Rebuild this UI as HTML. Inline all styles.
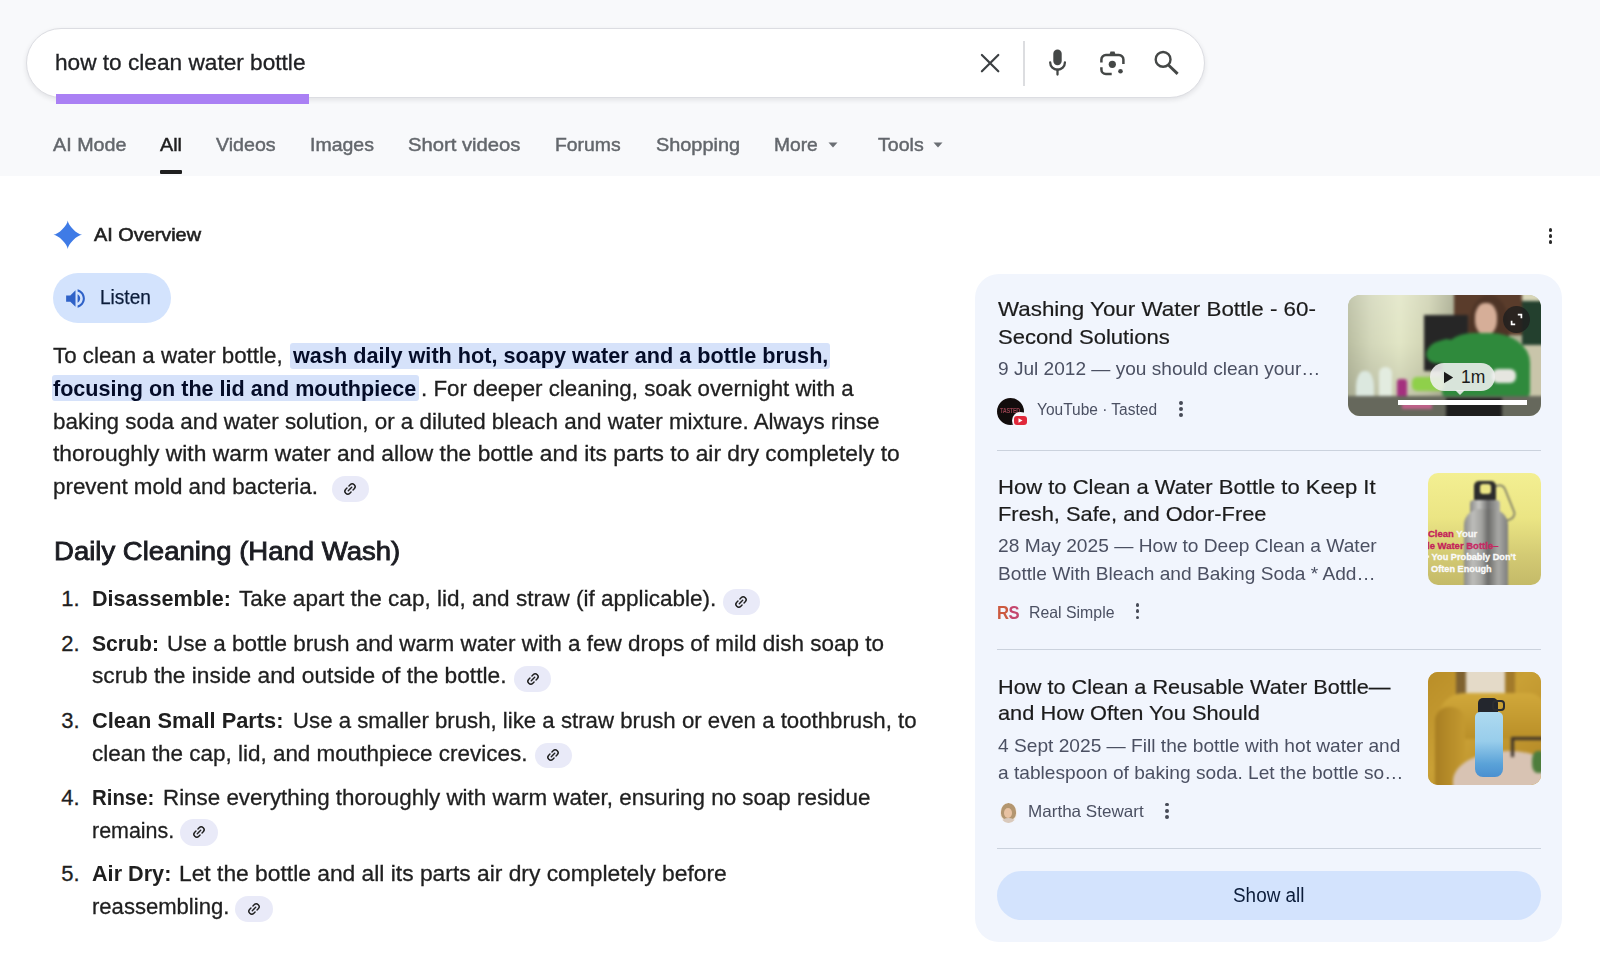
<!DOCTYPE html>
<html><head><meta charset="utf-8"><style>
html,body{margin:0;padding:0;}
body{width:1600px;height:973px;position:relative;overflow:hidden;background:#fff;font-family:"Liberation Sans",sans-serif;}
.ln{position:absolute;white-space:pre;}
.abs{position:absolute;}
.chip{position:absolute;background:#e9eaf8;border-radius:14px;display:flex;align-items:center;justify-content:center;}
.dot{position:absolute;border-radius:50%;}
</style></head><body>
<div class="abs" style="left:0;top:0;width:1600px;height:176px;background:#f8f9fb"></div>
<!-- search box -->
<div class="abs" style="left:26px;top:28px;width:1177px;height:68px;border:1px solid #dcdde2;border-radius:36px;background:#fff;box-shadow:0 2px 5px rgba(32,33,36,0.10)"></div>
<div class="abs" style="left:56px;top:94px;width:253px;height:10px;background:#aa80f4"></div>
<!-- X icon -->
<svg class="abs" style="left:970px;top:44px" width="40" height="40" viewBox="0 0 40 40"><path d="M11.9 11L28.3 27.3M28.3 11L11.9 27.3" stroke="#3c4043" stroke-width="2.2" stroke-linecap="round" fill="none"/></svg>
<div class="abs" style="left:1023.2px;top:41px;width:1.4px;height:44.5px;background:#dcdde0"></div>
<!-- mic -->
<svg class="abs" style="left:1040px;top:44px" width="40" height="38" viewBox="0 0 40 38"><rect x="13.3" y="5.5" width="8.4" height="15.8" rx="4.2" fill="#444746"/><path d="M10.2 18.4a7.3 7.3 0 0 0 14.7 0" stroke="#444746" stroke-width="2.3" stroke-linecap="round" fill="none"/><path d="M17.5 25.6V30.6" stroke="#444746" stroke-width="2.3" stroke-linecap="round"/></svg>
<!-- lens -->
<svg class="abs" style="left:1092px;top:44px" width="40" height="38" viewBox="0 0 40 38"><path d="M17.4 10.8L18.5 7.4H22.5L23.6 10.8Z" fill="#444746"/><g fill="none" stroke="#444746" stroke-width="2.5"><path d="M9.4 18.6V15.6A4.5 4.5 0 0 1 13.9 11.1H26.9A4.5 4.5 0 0 1 31.4 15.6V20.1"/><path d="M9.4 23.2V25.4A4.5 4.5 0 0 0 13.9 29.9H19.7"/></g><circle cx="20.3" cy="20.3" r="3.6" fill="#444746"/><circle cx="28.5" cy="27.3" r="2.3" fill="#444746"/></svg>
<!-- search -->
<svg class="abs" style="left:1146px;top:44px" width="40" height="38" viewBox="0 0 40 38"><circle cx="17.1" cy="15.4" r="7.4" stroke="#444746" stroke-width="2.4" fill="none"/><path d="M23.2 21.7L30.6 28.9" stroke="#444746" stroke-width="2.9" stroke-linecap="square"/></svg>
<!-- tab underline & arrows -->
<div class="abs" style="left:159.5px;top:170px;width:22.5px;height:4.2px;background:#1f1f1f;border-radius:1px"></div>
<svg class="abs" style="left:827.5px;top:142px" width="10" height="6" viewBox="0 0 10 6"><path d="M0.5 0.5h9L5 5.5z" fill="#6b6f74"/></svg>
<svg class="abs" style="left:932.5px;top:142px" width="10" height="6" viewBox="0 0 10 6"><path d="M0.5 0.5h9L5 5.5z" fill="#6b6f74"/></svg>
<!-- star -->
<svg class="abs" style="left:53.45px;top:220px" width="29.5" height="29.5" viewBox="0 0 30 30"><path d="M15 0.5C15.3 5.5 24.5 14.7 29.5 15 24.5 15.3 15.3 24.5 15 29.5 14.7 24.5 5.5 15.3 0.5 15 5.5 14.7 14.7 5.5 15 0.5z" fill="#3f7be6"/></svg>
<div class='dot' style='left:1548.7px;top:228.0px;width:3.8px;height:3.8px;background:#2a2a2a'></div><div class='dot' style='left:1548.7px;top:234.2px;width:3.8px;height:3.8px;background:#2a2a2a'></div><div class='dot' style='left:1548.7px;top:240.4px;width:3.8px;height:3.8px;background:#2a2a2a'></div>
<!-- listen pill -->
<div class="abs" style="left:52.5px;top:273px;width:118px;height:50px;border-radius:25px;background:#d3e3fd"></div>
<svg class="abs" style="left:62.5px;top:285.6px" width="25" height="25" viewBox="0 0 24 24"><path d="M3 9v6h4l5 5V4L7 9H3zm13.5 3c0-1.77-1.02-3.29-2.5-4.03v8.05c1.48-.73 2.5-2.25 2.5-4.02zM14 3.23v2.06c2.89.86 5 3.54 5 6.71s-2.11 5.85-5 6.71v2.06c4.010-.91 7-4.490 7-8.77s-2.99-7.86-7-8.77z" fill="#2f62c8"/></svg>
<!-- highlights -->
<div class="abs" style="left:290.1px;top:342.5px;width:539.5px;height:26px;border-radius:3px;background:#d6e2fa"></div>
<div class="abs" style="left:52.2px;top:375.4px;width:366.6px;height:25.6px;border-radius:3px;background:#d6e2fa"></div>
<div class='chip' style='left:332px;top:476px;width:36.5px;height:26.4px'><svg width="16" height="16" viewBox="0 0 16 16"><g fill="none" stroke="#1f1f1f" stroke-width="1.45" stroke-linecap="round" transform="rotate(-45 8 8)"><path d="M6.6 5.1H4.9a2.9 2.9 0 0 0 0 5.8H6.6"/><path d="M9.4 5.1h1.7a2.9 2.9 0 0 1 0 5.8H9.4"/><path d="M5.6 8h4.8"/></g></svg></div>
<div class='chip' style='left:723px;top:588.7px;width:36.5px;height:25.9px'><svg width="16" height="16" viewBox="0 0 16 16"><g fill="none" stroke="#1f1f1f" stroke-width="1.45" stroke-linecap="round" transform="rotate(-45 8 8)"><path d="M6.6 5.1H4.9a2.9 2.9 0 0 0 0 5.8H6.6"/><path d="M9.4 5.1h1.7a2.9 2.9 0 0 1 0 5.8H9.4"/><path d="M5.6 8h4.8"/></g></svg></div>
<div class='chip' style='left:514px;top:665.7px;width:37.3px;height:26.5px'><svg width="16" height="16" viewBox="0 0 16 16"><g fill="none" stroke="#1f1f1f" stroke-width="1.45" stroke-linecap="round" transform="rotate(-45 8 8)"><path d="M6.6 5.1H4.9a2.9 2.9 0 0 0 0 5.8H6.6"/><path d="M9.4 5.1h1.7a2.9 2.9 0 0 1 0 5.8H9.4"/><path d="M5.6 8h4.8"/></g></svg></div>
<div class='chip' style='left:534.6px;top:742.5px;width:37.4px;height:25.9px'><svg width="16" height="16" viewBox="0 0 16 16"><g fill="none" stroke="#1f1f1f" stroke-width="1.45" stroke-linecap="round" transform="rotate(-45 8 8)"><path d="M6.6 5.1H4.9a2.9 2.9 0 0 0 0 5.8H6.6"/><path d="M9.4 5.1h1.7a2.9 2.9 0 0 1 0 5.8H9.4"/><path d="M5.6 8h4.8"/></g></svg></div>
<div class='chip' style='left:180.4px;top:819px;width:38.0px;height:26.6px'><svg width="16" height="16" viewBox="0 0 16 16"><g fill="none" stroke="#1f1f1f" stroke-width="1.45" stroke-linecap="round" transform="rotate(-45 8 8)"><path d="M6.6 5.1H4.9a2.9 2.9 0 0 0 0 5.8H6.6"/><path d="M9.4 5.1h1.7a2.9 2.9 0 0 1 0 5.8H9.4"/><path d="M5.6 8h4.8"/></g></svg></div>
<div class='chip' style='left:235px;top:896.4px;width:38.0px;height:26.1px'><svg width="16" height="16" viewBox="0 0 16 16"><g fill="none" stroke="#1f1f1f" stroke-width="1.45" stroke-linecap="round" transform="rotate(-45 8 8)"><path d="M6.6 5.1H4.9a2.9 2.9 0 0 0 0 5.8H6.6"/><path d="M9.4 5.1h1.7a2.9 2.9 0 0 1 0 5.8H9.4"/><path d="M5.6 8h4.8"/></g></svg></div>
<!-- card -->
<div class="abs" style="left:975px;top:273.5px;width:587px;height:668px;border-radius:24px;background:#f1f5fd"></div>
<div class="abs" style="left:997px;top:449.5px;width:544px;height:1px;background:#cbd2dd"></div>
<div class="abs" style="left:997px;top:649px;width:544px;height:1px;background:#cbd2dd"></div>
<div class="abs" style="left:997px;top:848px;width:544px;height:1px;background:#cbd2dd"></div>
<div class="abs" style="left:997px;top:871px;width:544px;height:49px;border-radius:25px;background:#d3e3fd"></div>
<div class="abs" style="left:1347.5px;top:295px;width:193.5px;height:120.5px;border-radius:12px;overflow:hidden;background:#c3c6aa">
 <div class="abs" style="left:-6px;top:-6px;width:206px;height:133px;filter:blur(1.8px)">
  <div class='abs' style='left:0px;top:0px;width:206px;height:133px;background:linear-gradient(90deg,#b3b79a 0%,#d3d7ba 14%,#e2e6c6 28%,#cfd2b2 42%,#a9ac90 54%,#8f9178 62%,#c4c2a6 100%);'></div>
  <div class='abs' style='left:0px;top:0px;width:206px;height:133px;background:linear-gradient(180deg,rgba(255,255,255,0.15) 0%,rgba(255,255,255,0) 40%,rgba(80,80,70,0.25) 100%);'></div>
  <div class='abs' style='left:112px;top:0px;width:70px;height:46px;background:#5a3c2b;'></div>
  <div class='abs' style='left:180px;top:0px;width:26px;height:14px;background:#d8d6b8;'></div>
  <div class='abs' style='left:180px;top:12px;width:26px;height:46px;background:#23402e;'></div>
  <div class='abs' style='left:176px;top:56px;width:30px;height:70px;background:#c9c5aa;'></div>
  <div class='abs' style='left:82px;top:26px;width:44px;height:56px;background:#262626;'></div>
  <div class='abs' style='left:127px;top:6px;width:40px;height:66px;background:#4e3426;border-radius:48% 48% 25% 25%'></div>
  <div class='abs' style='left:133px;top:14px;width:22px;height:32px;background:#d6ae98;border-radius:45%'></div>
  <div class='abs' style='left:84px;top:52px;width:30px;height:22px;background:#2f8a3c;border-radius:50% 30% 30% 50%;transform:rotate(-18deg)'></div>
  <div class='abs' style='left:100px;top:44px;width:88px;height:66px;background:#2f8a3c;border-radius:35% 45% 10% 10%'></div>
  <div class='abs' style='left:150px;top:80px;width:24px;height:14px;background:#e6e6e0;border-radius:6px'></div>
  <div class='abs' style='left:14px;top:82px;width:18px;height:34px;background:#dce8df;border-radius:45% 45% 4px 4px'></div>
  <div class='abs' style='left:37px;top:78px;width:13px;height:38px;background:#e3ece0;border-radius:6px 6px 3px 3px'></div>
  <div class='abs' style='left:55px;top:90px;width:10px;height:30px;background:#a4307e;border-radius:3px'></div>
  <div class='abs' style='left:70px;top:88px;width:32px;height:14px;background:#8fd04a;border-radius:5px'></div>
  <div class='abs' style='left:0px;top:107px;width:206px;height:26px;background:#66685c;'></div>
  <div class='abs' style='left:104px;top:109px;width:56px;height:24px;background:#1e1e1e;'></div>
  <div class='abs' style='left:60px;top:114px;width:30px;height:6px;background:#c0608a;'></div>
 </div>
 <div class='abs' style='left:50px;top:104.5px;width:129.5px;height:5.5px;background:#fff;'></div>
 <div class="abs" style="left:82px;top:67.8px;width:65.5px;height:28px;border-radius:14px;background:rgba(240,240,240,0.88)"></div>
 <svg class="abs" style="left:107px;top:95px" width="10" height="5" viewBox="0 0 10 5"><path d="M0 0h10L5 5z" fill="rgba(240,240,240,0.88)"/></svg>
 <svg class="abs" style="left:95px;top:75.5px" width="11" height="13" viewBox="0 0 11 13"><path d="M1 0.8l9.2 5.7L1 12.2z" fill="#1a1a1a"/></svg>
 <div class="ln" style="left:113.5px;top:68.5px;font-size:17.5px;line-height:26px;color:#1a1a1a">1m</div>
 <div class="abs" style="left:155.4px;top:11px;width:27px;height:27px;border-radius:50%;background:rgba(30,30,30,0.8)"></div>
 <svg class="abs" style="left:162.5px;top:18px" width="13" height="13" viewBox="0 0 13 13"><path d="M7.8 1.6h3.6v3.6M5.2 11.4H1.6V7.8" stroke="#fff" stroke-width="1.7" fill="none"/></svg>
</div>
<!-- favicon youtube -->
<div class="abs" style="left:997.2px;top:397.8px;width:27px;height:27px;border-radius:50%;background:#120c0c;overflow:hidden">
  <div class="ln" style="left:3px;top:8.5px;font-size:7px;line-height:10px;font-weight:700;color:#93404e;letter-spacing:-0.4px;transform:scale(0.8,1.15);transform-origin:0 50%">TASTED</div>
</div>
<div class="abs" style="left:1011.5px;top:411.5px;width:17px;height:17px;border-radius:50%;background:#f6f7fb"></div>
<div class="abs" style="left:1014.3px;top:416.3px;width:12.3px;height:8.4px;border-radius:3px;background:#e0283a"></div>
<svg class="abs" style="left:1018.3px;top:418px" width="5" height="5" viewBox="0 0 5 5"><path d="M0.5 0.3l4 2.2L0.5 4.7z" fill="#fff"/></svg>
<div class='dot' style='left:1179.2px;top:401.1px;width:3.8px;height:3.8px;background:#474b57'></div><div class='dot' style='left:1179.2px;top:407.1px;width:3.8px;height:3.8px;background:#474b57'></div><div class='dot' style='left:1179.2px;top:413.1px;width:3.8px;height:3.8px;background:#474b57'></div>
<div class="abs" style="left:1428px;top:473px;width:113px;height:112px;border-radius:10px;overflow:hidden;background:linear-gradient(180deg,#f3ef92 0%,#ebe584 40%,#d2c973 75%,#c4ba68 100%)">
 <div class="abs" style="left:-4px;top:-4px;width:121px;height:120px;filter:blur(1px)">
  <div class='abs' style='left:70px;top:15px;width:13px;height:34px;background:transparent;border:2.2px solid #8c8a6c;border-radius:7px;transform:rotate(-22deg)'></div>
  <div class='abs' style='left:50px;top:12px;width:22px;height:20px;background:#2c2c2c;border-radius:5px 5px 2px 2px'></div>
  <div class='abs' style='left:55.5px;top:15px;width:11px;height:10px;background:#ece686;border-radius:3px'></div>
  <div class='abs' style='left:46px;top:31px;width:30px;height:14px;background:linear-gradient(90deg,#8a8a88,#c8c8c5 30%,#707070 60%,#b0b0ad 100%);border-radius:4px 4px 0 0'></div>
  <div class='abs' style='left:40px;top:40px;width:44px;height:90px;background:linear-gradient(90deg,#8c8c8a 0%,#bdbdba 20%,#a3a3a0 40%,#6c6c6a 55%,#a9a9a6 78%,#7e7e7c 100%);border-radius:16px 16px 0 0'></div>
 </div>
 <div class="ln" style="left:0px;top:55px;font-size:9.5px;line-height:11px;font-weight:700;color:#c41e5a;letter-spacing:0px;-webkit-text-stroke:0.3px #c41e5a">Clean <span style="color:#f6f6f6;-webkit-text-stroke:0.3px #f6f6f6">Your</span></div>
 <div class="ln" style="left:-1px;top:66.5px;font-size:9.5px;line-height:11px;font-weight:700;color:#c41e5a;-webkit-text-stroke:0.3px #c41e5a">le Water <span style="color:#c8306a">Bottle–</span></div>
 <div class="ln" style="left:-2px;top:79px;font-size:9.2px;line-height:11px;font-weight:700;color:#fafafa;-webkit-text-stroke:0.3px #fafafa">• You Probably Don't</div>
 <div class="ln" style="left:3px;top:90.5px;font-size:9.2px;line-height:11px;font-weight:700;color:#fafafa;-webkit-text-stroke:0.3px #fafafa">Often Enough</div>
</div>
<div class="ln" style="left:996.5px;top:601.5px;font-size:17.5px;line-height:22px;font-weight:700;color:#cc5a40;letter-spacing:-0.6px;transform:scaleX(0.95);transform-origin:0 0">R<span style="color:#c4466e">S</span></div>
<div class='dot' style='left:1135.7px;top:603.1px;width:3.8px;height:3.8px;background:#474b57'></div><div class='dot' style='left:1135.7px;top:609.3px;width:3.8px;height:3.8px;background:#474b57'></div><div class='dot' style='left:1135.7px;top:615.5px;width:3.8px;height:3.8px;background:#474b57'></div>
<div class="abs" style="left:1428px;top:671.5px;width:113px;height:113px;border-radius:10px;overflow:hidden;background:#c49a2e">
 <div class="abs" style="left:-5px;top:-5px;width:123px;height:123px;filter:blur(1.5px)">
  <div class='abs' style='left:0px;top:0px;width:123px;height:123px;background:linear-gradient(135deg,#b88c26 0%,#c9a035 45%,#b08424 100%);'></div>
  <div class='abs' style='left:41px;top:0px;width:42px;height:31px;background:#e4dac8;'></div>
  <div class='abs' style='left:33px;top:0px;width:10px;height:34px;background:#7f6230;'></div>
  <div class='abs' style='left:82px;top:0px;width:10px;height:30px;background:#a27a2a;'></div>
  <div class='abs' style='left:15px;top:26px;width:108px;height:46px;background:linear-gradient(180deg,#d0a83a 0%,#b98f28 100%);border-radius:26px 18px 6px 6px'></div>
  <div class='abs' style='left:12px;top:40px;width:30px;height:90px;background:linear-gradient(90deg,#a87e22,#c49a30);border-radius:14px 14px 0 0'></div>
  <div class='abs' style='left:30px;top:84px;width:110px;height:60px;background:#d8c3b3;border-radius:50% 50% 0 0'></div>
  <div class='abs' style='left:88px;top:70px;width:35px;height:3px;background:#3a3028;'></div>
  <div class='abs' style='left:88px;top:70px;width:3px;height:20px;background:#3a3028;'></div>
  <div class='abs' style='left:109px;top:84px;width:14px;height:22px;background:#4d7d3c;border-radius:40%'></div>
 </div>
 <div class='abs' style='left:50px;top:26px;width:20px;height:16px;background:#23262d;border-radius:5px 5px 2px 2px'></div>
 <div class='abs' style='left:64px;top:28px;width:13px;height:11px;background:transparent;border:2.2px solid #2a2c30;border-radius:4px;box-sizing:border-box'></div>
 <div class='abs' style='left:46.5px;top:40px;width:28px;height:65px;background:linear-gradient(180deg,#aedaf0 0%,#98cdeb 45%,#5aa2d8 80%,#4a90d0 100%);border-radius:5px 5px 8px 8px'></div>
</div>
<div class="abs" style="left:999.5px;top:802.5px;width:17px;height:20.5px;border-radius:50%;overflow:hidden;background:#f3ece4"><div class="abs" style="left:1px;top:0.5px;width:15px;height:17px;border-radius:50% 50% 40% 40%;background:#b39670;filter:blur(0.5px)"></div><div class="abs" style="left:4.5px;top:5px;width:8px;height:10px;border-radius:50%;background:#e8c2a2;filter:blur(0.4px)"></div><div class="abs" style="left:2px;top:15px;width:13px;height:6px;border-radius:50% 50% 0 0;background:#d9c9bc"></div></div>
<div class='dot' style='left:1165.3px;top:802.6px;width:3.8px;height:3.8px;background:#474b57'></div><div class='dot' style='left:1165.3px;top:808.8px;width:3.8px;height:3.8px;background:#474b57'></div><div class='dot' style='left:1165.3px;top:815.0px;width:3.8px;height:3.8px;background:#474b57'></div>
<div class='ln' style='left:54.50px;top:48.48px;font-size:22px;line-height:29px;font-weight:400;-webkit-text-stroke:0.3px;color:#202124;transform:scaleX(1.0293);transform-origin:0 0'>how to clean water bottle</div>
<div class='ln' style='left:52.50px;top:132.59px;font-size:18.5px;line-height:24px;font-weight:400;-webkit-text-stroke:0.45px;color:#63676c;transform:scaleX(1.0667);transform-origin:0 0'>AI Mode</div>
<div class='ln' style='left:159.50px;top:132.59px;font-size:18.5px;line-height:24px;font-weight:400;-webkit-text-stroke:0.45px;color:#1f1f1f;transform:scaleX(1.0699);transform-origin:0 0'>All</div>
<div class='ln' style='left:215.75px;top:132.59px;font-size:18.5px;line-height:24px;font-weight:400;-webkit-text-stroke:0.45px;color:#63676c;transform:scaleX(1.0607);transform-origin:0 0'>Videos</div>
<div class='ln' style='left:309.80px;top:132.59px;font-size:18.5px;line-height:24px;font-weight:400;-webkit-text-stroke:0.45px;color:#63676c;transform:scaleX(1.0532);transform-origin:0 0'>Images</div>
<div class='ln' style='left:408.10px;top:132.59px;font-size:18.5px;line-height:24px;font-weight:400;-webkit-text-stroke:0.45px;color:#63676c;transform:scaleX(1.0939);transform-origin:0 0'>Short videos</div>
<div class='ln' style='left:555.20px;top:132.59px;font-size:18.5px;line-height:24px;font-weight:400;-webkit-text-stroke:0.45px;color:#63676c;transform:scaleX(1.0462);transform-origin:0 0'>Forums</div>
<div class='ln' style='left:655.50px;top:132.59px;font-size:18.5px;line-height:24px;font-weight:400;-webkit-text-stroke:0.45px;color:#63676c;transform:scaleX(1.0743);transform-origin:0 0'>Shopping</div>
<div class='ln' style='left:774.40px;top:132.59px;font-size:18.5px;line-height:24px;font-weight:400;-webkit-text-stroke:0.45px;color:#63676c;transform:scaleX(1.039);transform-origin:0 0'>More</div>
<div class='ln' style='left:878.00px;top:132.59px;font-size:18.5px;line-height:24px;font-weight:400;-webkit-text-stroke:0.45px;color:#63676c;transform:scaleX(1.0578);transform-origin:0 0'>Tools</div>
<div class='ln' style='left:94.00px;top:221.92px;font-size:19px;line-height:25px;font-weight:400;-webkit-text-stroke:0.6px;color:#1f1f1f;transform:scaleX(1.0447);transform-origin:0 0'>AI Overview</div>
<div class='ln' style='left:99.75px;top:283.82px;font-size:20px;line-height:26px;font-weight:400;-webkit-text-stroke:0.25px;color:#0b1c3a;transform:scaleX(0.9527);transform-origin:0 0'>Listen</div>
<div class='ln' style='left:53.00px;top:341.38px;font-size:22px;line-height:29px;font-weight:400;-webkit-text-stroke:0.3px;color:#1f1f1f;transform:scaleX(1.0148);transform-origin:0 0'>To clean a water bottle,</div>
<div class='ln' style='left:293.00px;top:341.38px;font-size:22px;line-height:29px;font-weight:700;-webkit-text-stroke:0px;color:#040c28;transform:scaleX(0.9842);transform-origin:0 0'>wash daily with hot, soapy water and a bottle brush,</div>
<div class='ln' style='left:53.00px;top:374.38px;font-size:22px;line-height:29px;font-weight:700;-webkit-text-stroke:0px;color:#040c28;transform:scaleX(0.9808);transform-origin:0 0'>focusing on the lid and mouthpiece</div>
<div class='ln' style='left:420.60px;top:374.38px;font-size:22px;line-height:29px;font-weight:400;-webkit-text-stroke:0.3px;color:#1f1f1f;transform:scaleX(1.0138);transform-origin:0 0'>. For deeper cleaning, soak overnight with a</div>
<div class='ln' style='left:53.00px;top:406.88px;font-size:22px;line-height:29px;font-weight:400;-webkit-text-stroke:0.3px;color:#1f1f1f;transform:scaleX(1.0194);transform-origin:0 0'>baking soda and water solution, or a diluted bleach and water mixture. Always rinse</div>
<div class='ln' style='left:53.00px;top:439.38px;font-size:22px;line-height:29px;font-weight:400;-webkit-text-stroke:0.3px;color:#1f1f1f;transform:scaleX(1.0366);transform-origin:0 0'>thoroughly with warm water and allow the bottle and its parts to air dry completely to</div>
<div class='ln' style='left:53.00px;top:471.88px;font-size:22px;line-height:29px;font-weight:400;-webkit-text-stroke:0.3px;color:#1f1f1f;transform:scaleX(1.0173);transform-origin:0 0'>prevent mold and bacteria.</div>
<div class='ln' style='left:53.75px;top:533.99px;font-size:26px;line-height:34px;font-weight:400;-webkit-text-stroke:0.85px;color:#1b1c22;transform:scaleX(1.0587);transform-origin:0 0'>Daily Cleaning (Hand Wash)</div>
<div class='ln' style='left:61.30px;top:584.38px;font-size:22px;line-height:29px;font-weight:400;-webkit-text-stroke:0.3px;color:#1f1f1f;transform:scaleX(1);transform-origin:0 0'>1.</div>
<div class='ln' style='left:61.30px;top:628.88px;font-size:22px;line-height:29px;font-weight:400;-webkit-text-stroke:0.3px;color:#1f1f1f;transform:scaleX(1);transform-origin:0 0'>2.</div>
<div class='ln' style='left:61.30px;top:705.88px;font-size:22px;line-height:29px;font-weight:400;-webkit-text-stroke:0.3px;color:#1f1f1f;transform:scaleX(1);transform-origin:0 0'>3.</div>
<div class='ln' style='left:61.30px;top:782.88px;font-size:22px;line-height:29px;font-weight:400;-webkit-text-stroke:0.3px;color:#1f1f1f;transform:scaleX(1);transform-origin:0 0'>4.</div>
<div class='ln' style='left:61.30px;top:859.38px;font-size:22px;line-height:29px;font-weight:400;-webkit-text-stroke:0.3px;color:#1f1f1f;transform:scaleX(1);transform-origin:0 0'>5.</div>
<div class='ln' style='left:92.00px;top:584.38px;font-size:22px;line-height:29px;font-weight:700;-webkit-text-stroke:0px;color:#1f1f1f;transform:scaleX(0.9798);transform-origin:0 0'>Disassemble:</div>
<div class='ln' style='left:238.50px;top:584.38px;font-size:22px;line-height:29px;font-weight:400;-webkit-text-stroke:0.3px;color:#1f1f1f;transform:scaleX(1.0244);transform-origin:0 0'>Take apart the cap, lid, and straw (if applicable).</div>
<div class='ln' style='left:92.00px;top:628.88px;font-size:22px;line-height:29px;font-weight:700;-webkit-text-stroke:0px;color:#1f1f1f;transform:scaleX(0.9614);transform-origin:0 0'>Scrub:</div>
<div class='ln' style='left:167.00px;top:628.88px;font-size:22px;line-height:29px;font-weight:400;-webkit-text-stroke:0.3px;color:#1f1f1f;transform:scaleX(1.0215);transform-origin:0 0'>Use a bottle brush and warm water with a few drops of mild dish soap to</div>
<div class='ln' style='left:92.00px;top:660.88px;font-size:22px;line-height:29px;font-weight:400;-webkit-text-stroke:0.3px;color:#1f1f1f;transform:scaleX(1.0333);transform-origin:0 0'>scrub the inside and outside of the bottle.</div>
<div class='ln' style='left:92.00px;top:705.88px;font-size:22px;line-height:29px;font-weight:700;-webkit-text-stroke:0px;color:#1f1f1f;transform:scaleX(0.9913);transform-origin:0 0'>Clean Small Parts:</div>
<div class='ln' style='left:293.00px;top:705.88px;font-size:22px;line-height:29px;font-weight:400;-webkit-text-stroke:0.3px;color:#1f1f1f;transform:scaleX(1.0097);transform-origin:0 0'>Use a smaller brush, like a straw brush or even a toothbrush, to</div>
<div class='ln' style='left:92.00px;top:738.88px;font-size:22px;line-height:29px;font-weight:400;-webkit-text-stroke:0.3px;color:#1f1f1f;transform:scaleX(1.0201);transform-origin:0 0'>clean the cap, lid, and mouthpiece crevices.</div>
<div class='ln' style='left:92.00px;top:782.88px;font-size:22px;line-height:29px;font-weight:700;-webkit-text-stroke:0px;color:#1f1f1f;transform:scaleX(0.9264);transform-origin:0 0'>Rinse:</div>
<div class='ln' style='left:162.80px;top:782.88px;font-size:22px;line-height:29px;font-weight:400;-webkit-text-stroke:0.3px;color:#1f1f1f;transform:scaleX(1.0166);transform-origin:0 0'>Rinse everything thoroughly with warm water, ensuring no soap residue</div>
<div class='ln' style='left:92.00px;top:815.88px;font-size:22px;line-height:29px;font-weight:400;-webkit-text-stroke:0.3px;color:#1f1f1f;transform:scaleX(0.9744);transform-origin:0 0'>remains.</div>
<div class='ln' style='left:92.00px;top:859.38px;font-size:22px;line-height:29px;font-weight:700;-webkit-text-stroke:0px;color:#1f1f1f;transform:scaleX(0.9834);transform-origin:0 0'>Air Dry:</div>
<div class='ln' style='left:179.00px;top:859.38px;font-size:22px;line-height:29px;font-weight:400;-webkit-text-stroke:0.3px;color:#1f1f1f;transform:scaleX(1.0368);transform-origin:0 0'>Let the bottle and all its parts air dry completely before</div>
<div class='ln' style='left:92.00px;top:892.38px;font-size:22px;line-height:29px;font-weight:400;-webkit-text-stroke:0.3px;color:#1f1f1f;transform:scaleX(1.0025);transform-origin:0 0'>reassembling.</div>
<div class='ln' style='left:998.00px;top:294.72px;font-size:21px;line-height:27px;font-weight:400;-webkit-text-stroke:0.2px;color:#1b1b1b;transform:scaleX(1.0653);transform-origin:0 0'>Washing Your Water Bottle - 60-</div>
<div class='ln' style='left:998.00px;top:322.52px;font-size:21px;line-height:27px;font-weight:400;-webkit-text-stroke:0.2px;color:#1b1b1b;transform:scaleX(1.0505);transform-origin:0 0'>Second Solutions</div>
<div class='ln' style='left:998.00px;top:356.12px;font-size:19px;line-height:25px;font-weight:400;color:#4b5062;transform:scaleX(1.0038);transform-origin:0 0'>9 Jul 2012 — you should clean your…</div>
<div class='ln' style='left:1037.00px;top:399.36px;font-size:16px;line-height:21px;font-weight:400;color:#4b5062;transform:scaleX(0.9681);transform-origin:0 0'>YouTube · Tasted</div>
<div class='ln' style='left:998.00px;top:473.42px;font-size:21px;line-height:27px;font-weight:400;-webkit-text-stroke:0.2px;color:#1b1b1b;transform:scaleX(1.0492);transform-origin:0 0'>How to Clean a Water Bottle to Keep It</div>
<div class='ln' style='left:998.00px;top:500.22px;font-size:21px;line-height:27px;font-weight:400;-webkit-text-stroke:0.2px;color:#1b1b1b;transform:scaleX(1.0409);transform-origin:0 0'>Fresh, Safe, and Odor-Free</div>
<div class='ln' style='left:998.00px;top:533.42px;font-size:19px;line-height:25px;font-weight:400;color:#4b5062;transform:scaleX(1.0092);transform-origin:0 0'>28 May 2025 — How to Deep Clean a Water</div>
<div class='ln' style='left:998.00px;top:561.22px;font-size:19px;line-height:25px;font-weight:400;color:#4b5062;transform:scaleX(1.0071);transform-origin:0 0'>Bottle With Bleach and Baking Soda * Add…</div>
<div class='ln' style='left:1028.50px;top:601.98px;font-size:16.5px;line-height:21px;font-weight:400;color:#4b5062;transform:scaleX(0.961);transform-origin:0 0'>Real Simple</div>
<div class='ln' style='left:998.00px;top:672.52px;font-size:21px;line-height:27px;font-weight:400;-webkit-text-stroke:0.2px;color:#1b1b1b;transform:scaleX(1.0334);transform-origin:0 0'>How to Clean a Reusable Water Bottle—</div>
<div class='ln' style='left:998.00px;top:699.32px;font-size:21px;line-height:27px;font-weight:400;-webkit-text-stroke:0.2px;color:#1b1b1b;transform:scaleX(1.0381);transform-origin:0 0'>and How Often You Should</div>
<div class='ln' style='left:998.00px;top:732.52px;font-size:19px;line-height:25px;font-weight:400;color:#4b5062;transform:scaleX(1.0079);transform-origin:0 0'>4 Sept 2025 — Fill the bottle with hot water and</div>
<div class='ln' style='left:998.00px;top:760.22px;font-size:19px;line-height:25px;font-weight:400;color:#4b5062;transform:scaleX(1.0073);transform-origin:0 0'>a tablespoon of baking soda. Let the bottle so…</div>
<div class='ln' style='left:1028.00px;top:801.08px;font-size:16.5px;line-height:21px;font-weight:400;color:#4b5062;transform:scaleX(1.0342);transform-origin:0 0'>Martha Stewart</div>
<div class='ln' style='left:1232.90px;top:882.07px;font-size:20px;line-height:26px;font-weight:400;color:#0b1c3a;transform:scaleX(0.9456);transform-origin:0 0'>Show all</div>
</body></html>
